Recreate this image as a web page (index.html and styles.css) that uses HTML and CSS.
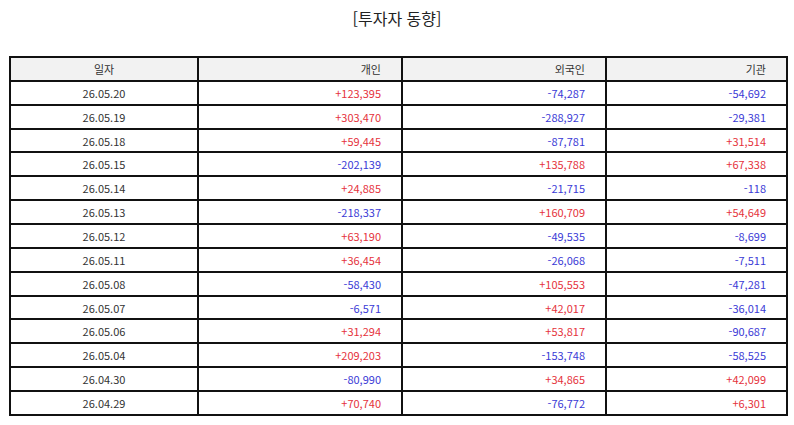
FILE: index.html
```html
<!DOCTYPE html>
<html lang="ko">
<head>
<meta charset="utf-8">
<title>투자자 동향</title>
<link rel="stylesheet" href="styles.css">
</head>
<body>
<div class="page">
  <h1 class="title">[투자자 동향]</h1>
  <table class="grid">
    <colgroup>
      <col class="c-date"><col class="c-num"><col class="c-num"><col class="c-last">
    </colgroup>
    <thead>
      <tr><th class="center">일자</th><th>개인</th><th>외국인</th><th>기관</th></tr>
    </thead>
    <tbody>
      <tr><td class="center">26.05.20</td><td class="up">+123,395</td><td class="down">-74,287</td><td class="down">-54,692</td></tr>
      <tr><td class="center">26.05.19</td><td class="up">+303,470</td><td class="down">-288,927</td><td class="down">-29,381</td></tr>
      <tr><td class="center">26.05.18</td><td class="up">+59,445</td><td class="down">-87,781</td><td class="up">+31,514</td></tr>
      <tr><td class="center">26.05.15</td><td class="down">-202,139</td><td class="up">+135,788</td><td class="up">+67,338</td></tr>
      <tr><td class="center">26.05.14</td><td class="up">+24,885</td><td class="down">-21,715</td><td class="down">-118</td></tr>
      <tr><td class="center">26.05.13</td><td class="down">-218,337</td><td class="up">+160,709</td><td class="up">+54,649</td></tr>
      <tr><td class="center">26.05.12</td><td class="up">+63,190</td><td class="down">-49,535</td><td class="down">-8,699</td></tr>
      <tr><td class="center">26.05.11</td><td class="up">+36,454</td><td class="down">-26,068</td><td class="down">-7,511</td></tr>
      <tr><td class="center">26.05.08</td><td class="down">-58,430</td><td class="up">+105,553</td><td class="down">-47,281</td></tr>
      <tr><td class="center">26.05.07</td><td class="down">-6,571</td><td class="up">+42,017</td><td class="down">-36,014</td></tr>
      <tr><td class="center">26.05.06</td><td class="up">+31,294</td><td class="up">+53,817</td><td class="down">-90,687</td></tr>
      <tr><td class="center">26.05.04</td><td class="up">+209,203</td><td class="down">-153,748</td><td class="down">-58,525</td></tr>
      <tr><td class="center">26.04.30</td><td class="down">-80,990</td><td class="up">+34,865</td><td class="up">+42,099</td></tr>
      <tr><td class="center">26.04.29</td><td class="up">+70,740</td><td class="down">-76,772</td><td class="up">+6,301</td></tr>
    </tbody>
  </table>
</div>
</body>
</html>
```

FILE: styles.css
```css
html, body {
  margin: 0;
  padding: 0;
  background: #ffffff;
}
body {
  font-family: "Noto Sans CJK KR", "Noto Sans", "DejaVu Sans", sans-serif;
  color: #333333;
}
.page {
  width: 794px;
  padding: 6px 0 0 0;
}
.title {
  margin: 0;
  text-align: center;
  font-size: 16px;
  font-weight: normal;
  line-height: 24px;
  color: #222222;
}
.grid {
  margin: 26px 0 0 9px;
  width: 777px;
  border-collapse: collapse;
  table-layout: fixed;
  font-size: 11px;
}
.c-date { width: 188px; }
.c-num { width: 204px; }
.c-last { width: 181px; }
.grid tr {
  height: 23.86px;
}
.grid th,
.grid td {
  border: 2px solid #111111;
  padding: 0 20px 0 0;
  text-align: right;
  font-weight: normal;
  line-height: 14px;
  vertical-align: middle;
  color: #333333;
}
.grid th {
  background: #f2f2f2;
}
.grid .center {
  text-align: center;
  padding: 0;
}
.grid .up { color: #e5323c; }
.grid .down { color: #3a3ad6; }
```
